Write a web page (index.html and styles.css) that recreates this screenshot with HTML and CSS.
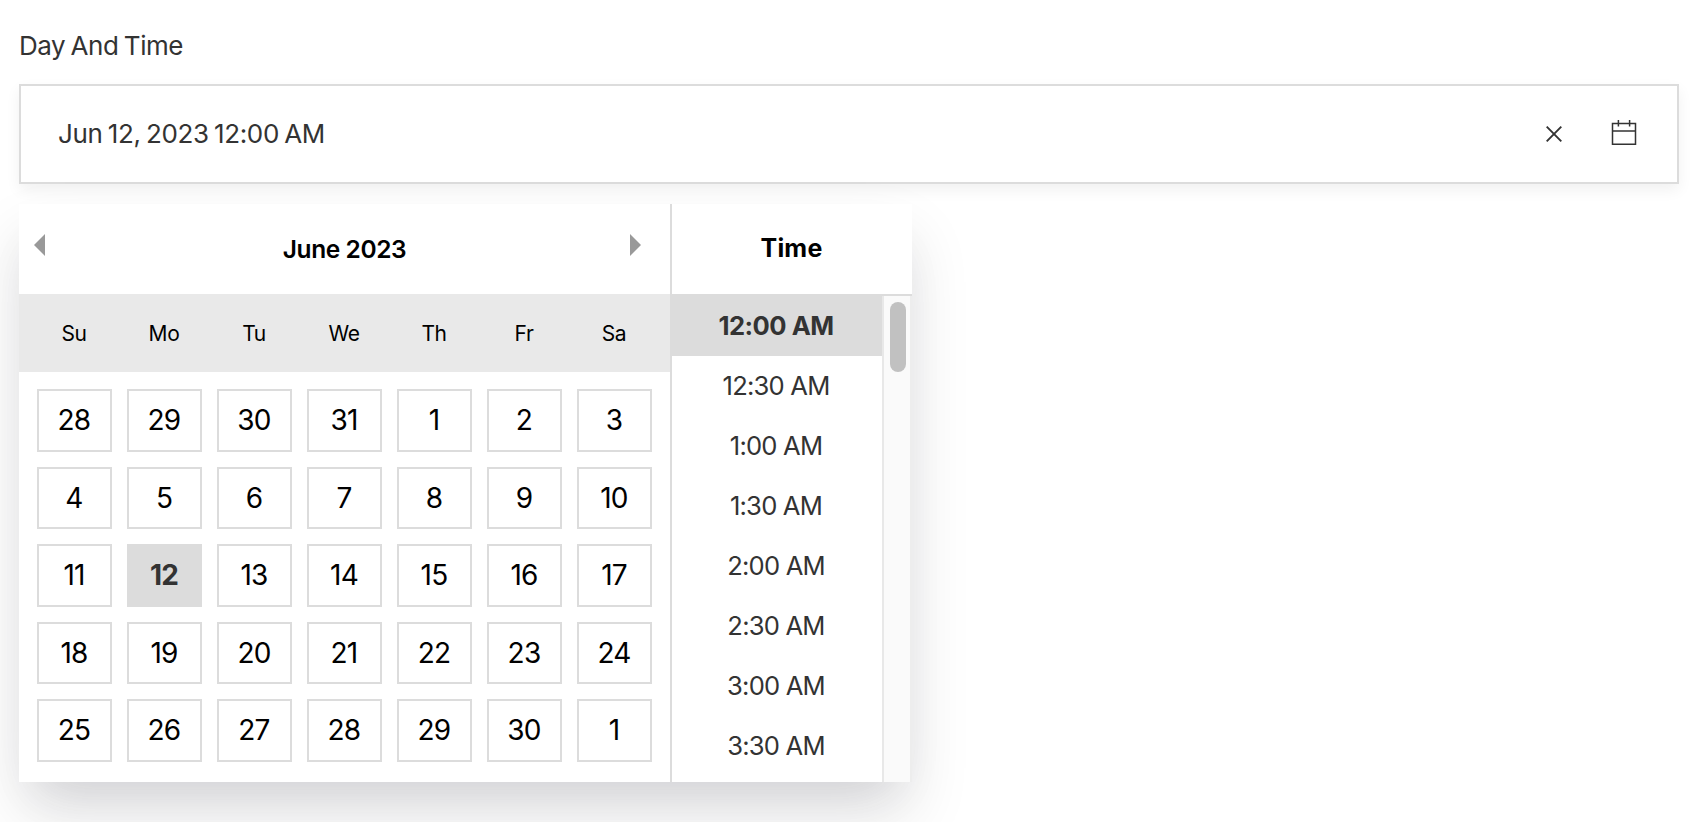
FILE: index.html
```
<!DOCTYPE html>
<html lang="en">
<head>
<meta charset="utf-8">
<title>Day And Time</title>
<link rel="stylesheet" href="styles.css">
</head>
<body>
<main class="field">
  <label class="label" for="when"><span>Day And Time</span></label>
  <div class="input" id="when">
    <span class="value">Jun 12, 2023 12:00 AM</span>
    <svg class="icon-clear" viewBox="0 0 16 16"><path d="M.7.7l14.6 14.6M15.3.7L.7 15.3"/></svg>
    <svg class="icon-cal" viewBox="0 0 26 26"><path d="M1.5 3.5h23v20.7h-23zM1.5 11h23M7.4 0v6.4M18.6 0v6.4"/></svg>
  </div>
  <div class="picker">
    <section class="calendar">
      <header class="month">
        <svg class="arrow" viewBox="0 0 11 22"><path d="M11 0v22L0 11z"/></svg>
        <h2 class="title">June 2023</h2>
        <svg class="arrow" viewBox="0 0 11 22"><path d="M0 0v22l11-11z"/></svg>
      </header>
      <div class="weekdays"><span>Su</span><span>Mo</span><span>Tu</span><span>We</span><span>Th</span><span>Fr</span><span>Sa</span></div>
      <div class="days">
        <span class="day">28</span><span class="day">29</span><span class="day">30</span><span class="day">31</span><span class="day">1</span><span class="day">2</span><span class="day">3</span>
        <span class="day">4</span><span class="day">5</span><span class="day">6</span><span class="day">7</span><span class="day">8</span><span class="day">9</span><span class="day">10</span>
        <span class="day">11</span><span class="day selected">12</span><span class="day">13</span><span class="day">14</span><span class="day">15</span><span class="day">16</span><span class="day">17</span>
        <span class="day">18</span><span class="day">19</span><span class="day">20</span><span class="day">21</span><span class="day">22</span><span class="day">23</span><span class="day">24</span>
        <span class="day">25</span><span class="day">26</span><span class="day">27</span><span class="day">28</span><span class="day">29</span><span class="day">30</span><span class="day">1</span>
      </div>
    </section>
    <section class="times">
      <h2 class="time-title">Time</h2>
      <div class="time-body">
        <ul class="time-list">
          <li class="current">12:00 AM</li><li>12:30 AM</li><li>1:00 AM</li><li>1:30 AM</li><li>2:00 AM</li><li>2:30 AM</li><li>3:00 AM</li><li>3:30 AM</li>
        </ul>
        <div class="track"><div class="thumb"></div></div>
      </div>
    </section>
  </div>
</main>
</body>
</html>
```
FILE: styles.css
```
* { box-sizing: border-box; }
body {
  margin: 0;
  height: 822px;
  overflow: hidden;
  background: #fff;
  color: #333;
  font-family: Inter, "Liberation Sans", sans-serif;
  font-size: 26px;
  font-feature-settings: "calt" 0;
}
.field { padding: 26px 13px 0 19px; }
.label {
  display: block;
  height: 58px;
  line-height: 40px;
  letter-spacing: -0.45px;
  word-spacing: -1.5px;
}
.input {
  display: flex;
  align-items: center;
  height: 100px;
  padding: 0 40px 0 37px;
  border: 2px solid #dcdcdc;
  background: #fff;
  box-shadow: 0 6px 14px rgba(0, 0, 0, .06);
}
.value { flex: 1; padding-bottom: 2px; letter-spacing: -0.35px; word-spacing: -1.7px; }
.icon-clear, .icon-cal { fill: none; stroke: #333; }
.icon-clear { width: 16px; height: 16px; stroke-width: 1.9; margin-right: 49px; }
.icon-cal { width: 26px; height: 26px; stroke-width: 1.5; margin-bottom: 2px; }
.picker {
  display: flex;
  width: 893px;
  height: 578px;
  margin-top: 20px;
  background: #fff;
  box-shadow: 0 32px 58px rgba(0, 0, 0, .11), 0 26px 50px -24px rgba(50, 50, 93, .14);
}
.calendar { width: 651px; }
.month {
  display: flex;
  align-items: center;
  justify-content: space-between;
  height: 90px;
  padding: 0 29px 0 15px;
}
.arrow { width: 11px; height: 22px; fill: #999; margin-bottom: 8px; }
.title, .time-title {
  margin: 0;
  color: #000;
  font-size: 24.5px;
  font-weight: 600;
  letter-spacing: -0.4px;
}
.title { padding: 0 0 1px 14px; }
.weekdays {
  display: grid;
  grid-template-columns: repeat(7, 90px);
  height: 78px;
  padding-left: 10px;
  line-height: 80px;
  text-align: center;
  background: #e9e9e9;
  color: #000;
  font-size: 21px;
  letter-spacing: -0.4px;
}
.days {
  display: grid;
  grid-template-columns: repeat(7, 75px);
  grid-auto-rows: 62.5px;
  gap: 15px;
  padding: 17px 0 0 18px;
}
.day {
  padding-right: 1px;
  border: 2px solid #dcdcdc;
  color: #000;
  font-size: 28px;
  line-height: 58px;
  text-align: center;
  letter-spacing: -0.8px;
}
.day.selected { background: #dcdcdc; color: #333; font-weight: 700; }
.times {
  display: flex;
  flex-direction: column;
  width: 242px;
  border-left: 2px solid #dcdcdc;
}
.time-title {
  height: 92px;
  padding-right: 1px;
  border-bottom: 2px solid #dcdcdc;
  line-height: 89px;
  text-align: center;
  font-size: 25px;
  font-weight: 700;
  letter-spacing: 0.2px;
}
.time-body { display: flex; flex: 1; }
.time-list {
  width: 210px;
  margin: 0;
  padding: 0;
  list-style: none;
  text-align: center;
  line-height: 60px;
  font-size: 25.6px;
  letter-spacing: -0.8px;
}
.time-list li { padding-right: 2px; }
.time-list .current {
  background: #dcdcdc;
  font-weight: 700;
  letter-spacing: -0.5px;
}
.track {
  width: 30px;
  padding: 6px 4px 0 6px;
  border: solid #e8e8e8;
  border-width: 0 2px;
  border-right-color: #ededed;
  background: #fafafa;
}
.thumb { width: 16px; height: 70px; border-radius: 8px; background: #c1c1c1; }
```
